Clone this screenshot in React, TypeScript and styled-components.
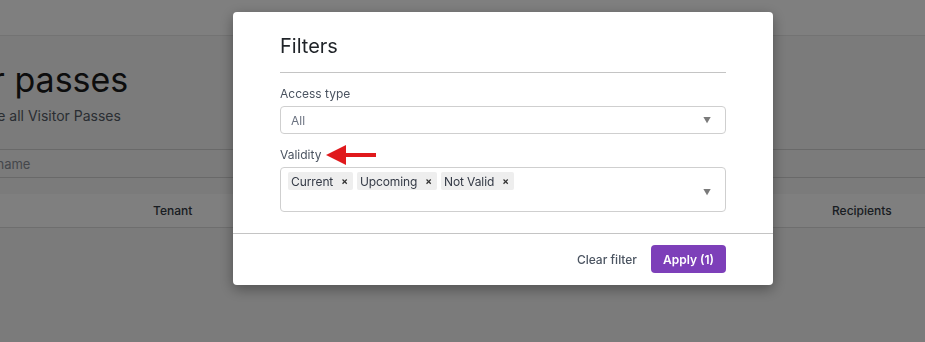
import styled, { createGlobalStyle } from "styled-components";

const GlobalStyle = createGlobalStyle`
  html, body {
    margin: 0;
    padding: 0;
    height: 100%;
    overflow: hidden;
  }
  body {
    font-family: Inter, "Noto Sans", sans-serif;
    background: #f6f6f6;
    color: #1f2328;
  }
`;

const Page = styled.div`
  width: 925px;
  height: 342px;
  background: #f6f6f6;
  overflow: hidden;
`;

const TopBar = styled.div`
  height: 35px;
  background: #ffffff;
  border-bottom: 1px solid #e6e6e6;
`;

const Main = styled.div`
  display: flex;
  flex-direction: column;
`;

const PageTitle = styled.h1`
  margin: 24px 0 0 -97px;
  font-size: 34px;
  font-weight: 400;
  line-height: 40px;
  color: #1b1b1b;
  white-space: nowrap;
`;

const PageSub = styled.p`
  margin: 6px 0 0 -48px;
  font-size: 14px;
  line-height: 20px;
  color: #555c66;
  white-space: nowrap;
`;

const Search = styled.div`
  margin-top: 23px;
  height: 27px;
  border-top: 1px solid #d3d3d3;
  border-bottom: 1px solid #d3d3d3;
  display: flex;
  align-items: center;
  font-size: 13px;
  color: #8a8f96;
  background: #f6f6f6;
`;

const Placeholder = styled.span`
  margin-left: -69px;
  white-space: nowrap;
`;

const TableHead = styled.div`
  margin-top: 16px;
  height: 33px;
  display: flex;
  align-items: center;
  background: #ffffff;
  border-bottom: 1px solid #dddddd;
  font-size: 12px;
  font-weight: 500;
  color: #333a44;
`;

const HeadCell = styled.div<{ $w: number }>`
  width: ${(p) => p.$w}px;
  flex: none;
`;

const Backdrop = styled.div`
  position: fixed;
  inset: 0;
  background: rgba(0, 0, 0, 0.5);
  display: flex;
  align-items: flex-start;
  padding: 12px 0 0 233px;
`;

const Modal = styled.div`
  width: 540px;
  background: #ffffff;
  border-radius: 4px;
  box-shadow: 0 4px 14px rgba(0, 0, 0, 0.35);
  overflow: hidden;
`;

const Body = styled.div`
  padding: 22px 47px 21px;
  display: flex;
  flex-direction: column;
`;

const Title = styled.h2`
  margin: 0;
  font-size: 20px;
  font-weight: 400;
  line-height: 24px;
  color: #1f2328;
  padding-bottom: 14px;
  border-bottom: 1px solid #c4c4c4;
`;

const Field = styled.div`
  display: flex;
  flex-direction: column;
  margin-top: 13px;
`;

const Label = styled.label`
  display: flex;
  align-items: center;
  height: 15px;
  font-size: 12px;
  line-height: 15px;
  color: #4b5461;
  margin-bottom: 5px;
`;

const Select = styled.div<{ $multi?: boolean }>`
  height: ${(p) => (p.$multi ? 45 : 28)}px;
  box-sizing: border-box;
  border: 1px solid #cfcfcf;
  border-radius: 4px;
  display: flex;
  align-items: ${(p) => (p.$multi ? "flex-start" : "center")};
  padding: ${(p) => (p.$multi ? "4px 14px 0 7px" : "0 14px 0 10px")};
  font-size: 12px;
  color: #6b7280;
`;

const Caret = styled.span`
  margin-left: auto;
  align-self: center;
  font-size: 8px;
  color: #7a7a7a;
`;

const Tags = styled.div`
  display: flex;
  gap: 4px;
`;

const Tag = styled.span`
  display: inline-flex;
  align-items: center;
  height: 18px;
  padding: 0 5px 0 3px;
  gap: 8px;
  background: #eeeeee;
  border-radius: 2px;
  font-size: 12px;
  letter-spacing: -0.1px;
  color: #343a46;
`;

const TagX = styled.span`
  font-size: 10px;
  font-weight: 700;
  color: #333333;
`;

const Footer = styled.div`
  border-top: 1px solid #c4c4c4;
  padding: 11px 47px 12px;
  display: flex;
  justify-content: flex-end;
  align-items: center;
  gap: 14px;
`;

const TextButton = styled.button`
  border: none;
  background: none;
  padding: 0;
  font-family: inherit;
  font-size: 12px;
  font-weight: 500;
  color: #4b5461;
`;

const PrimaryButton = styled.button`
  height: 28px;
  width: 75px;
  border: none;
  border-radius: 4px;
  background: #7d3fb9;
  color: #ffffff;
  font-family: inherit;
  font-size: 12px;
  font-weight: 600;
`;

const Arrow = () => (
  <svg width="52" height="20" viewBox="0 0 52 20" style={{ marginLeft: 5 }}>
    <polygon points="0,10 20,0 20,20" fill="#e0191c" />
    <rect x="18" y="8" width="32" height="4" fill="#e0191c" />
  </svg>
);

export default function App() {
  return (
    <>
      <GlobalStyle />
      <Page>
        <TopBar />
        <Main>
          <PageTitle>Visitor passes</PageTitle>
          <PageSub>Manage all Visitor Passes</PageSub>
          <Search>
            <Placeholder>Search by name</Placeholder>
          </Search>
          <TableHead>
            <HeadCell $w={153}></HeadCell>
            <HeadCell $w={679}>Tenant</HeadCell>
            <HeadCell $w={93}>Recipients</HeadCell>
          </TableHead>
        </Main>
      </Page>
      <Backdrop>
        <Modal>
          <Body>
            <Title>Filters</Title>
            <Field>
              <Label>Access type</Label>
              <Select>
                All
                <Caret>▼</Caret>
              </Select>
            </Field>
            <Field>
              <Label>
                Validity
                <Arrow />
              </Label>
              <Select $multi>
                <Tags>
                  <Tag>
                    Current <TagX>×</TagX>
                  </Tag>
                  <Tag>
                    Upcoming <TagX>×</TagX>
                  </Tag>
                  <Tag>
                    Not Valid <TagX>×</TagX>
                  </Tag>
                </Tags>
                <Caret>▼</Caret>
              </Select>
            </Field>
          </Body>
          <Footer>
            <TextButton>Clear filter</TextButton>
            <PrimaryButton>Apply (1)</PrimaryButton>
          </Footer>
        </Modal>
      </Backdrop>
    </>
  );
}
